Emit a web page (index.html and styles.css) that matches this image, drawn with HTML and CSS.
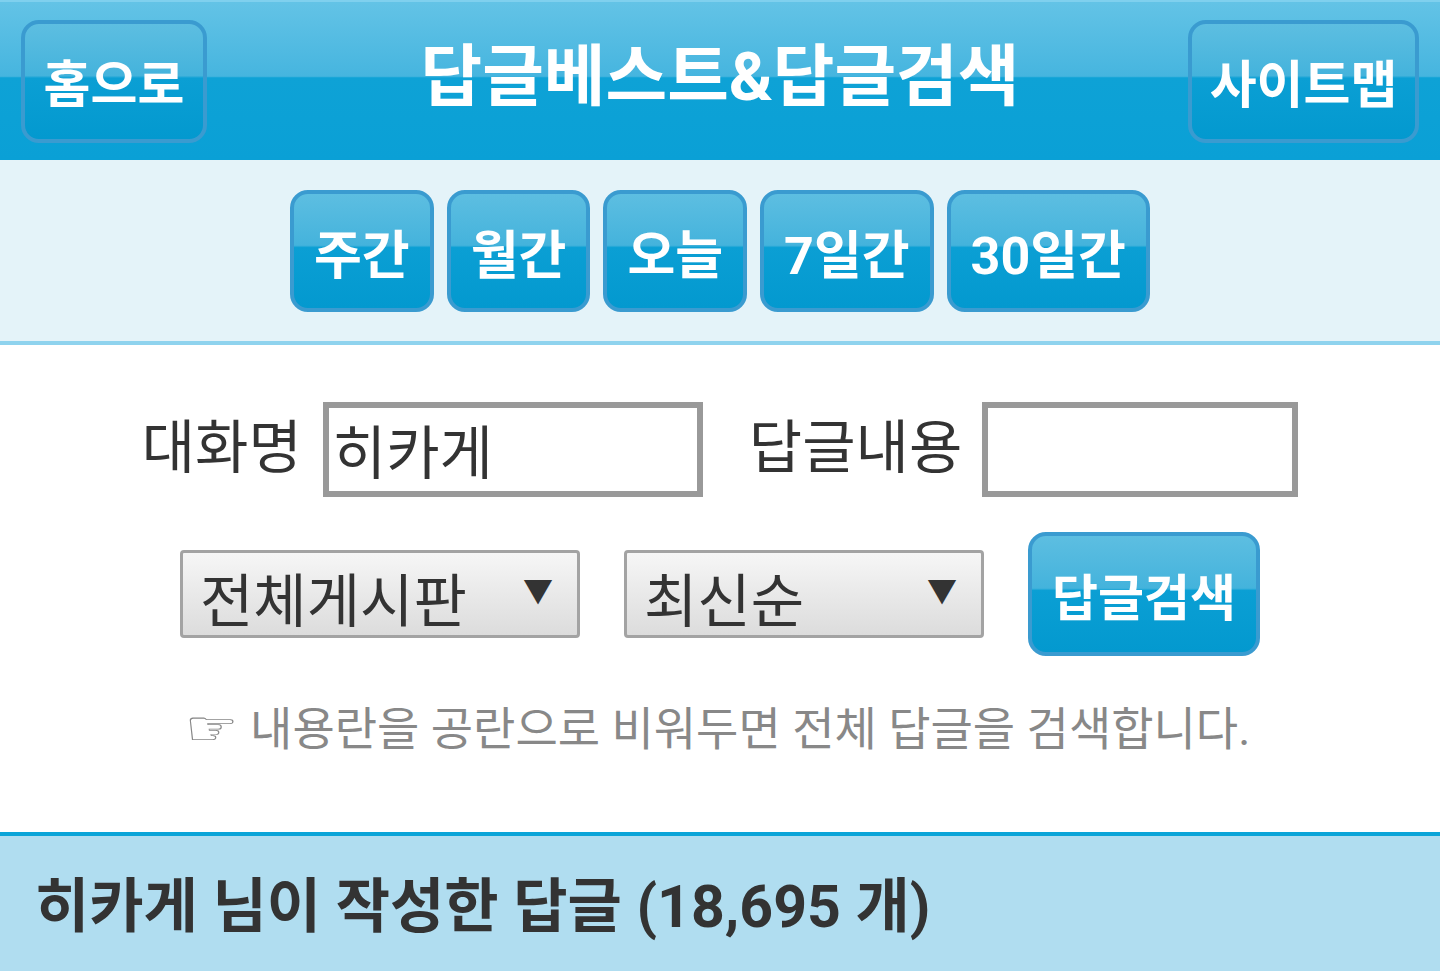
FILE: index.html
```html
<!DOCTYPE html>
<html lang="ko">
<head>
    <meta charset="UTF-8">
    <title>답글베스트&amp;답글검색</title>
    <link rel="stylesheet" href="styles.css">
</head>
<body>
<div class="header">
    <a class="head-btn btn-home" href="#">홈으로</a>
    <h1 class="title">답글베스트&amp;답글검색</h1>
    <a class="head-btn btn-map" href="#">사이트맵</a>
</div>

<!-- 기간 탭 -->
<div class="tabs">
    <a class="tab" href="#">주간</a>
    <a class="tab" href="#">월간</a>
    <a class="tab" href="#">오늘</a>
    <a class="tab" href="#">7일간</a>
    <a class="tab" href="#">30일간</a>
</div>

<div class="search">
    <div class="row">
        <label class="label">대화명</label>
        <input class="field field-name" type="text" value="히카게">
        <label class="label label-gap">답글내용</label>
        <input class="field field-body" type="text" value="">
    </div>
    <div class="row row-select">
        <div class="select select-board"><span>전체게시판</span><em>▼</em></div>
        <div class="select select-sort"><span>최신순</span><em>▼</em></div>
        <a class="btn-search" href="#">답글검색</a>
    </div>
    <p class="hint"><span class="hand">☞</span> 내용란을 공란으로 비워두면 전체 답글을 검색합니다.</p>
</div>

<div class="result">
    <h2>히카게 님이 작성한 답글 (18,695 개)</h2>
</div>
</body>
</html>
```

FILE: styles.css
```css
html, body, div, h1, h2, p, a, span, em, label {
    margin: 0;
    padding: 0;
}

body {
    background: #fff;
    font-family: Roboto, "Noto Sans CJK KR", sans-serif;
    color: #333;
}

a {
    text-decoration: none;
}

/* 상단 헤더 */
.header {
    height: 160px;
    padding: 0 21px;
    box-sizing: border-box;
    display: grid;
    grid-template-columns: 1fr auto 1fr;
    align-items: center;
    border-top: 2px solid #7fd0ee;
    background: linear-gradient(to bottom, #63c3e6 0%, #46b5df 47%, #0ea2d6 48%, #0aa0d6 100%);
}

.title {
    font-size: 67px;
    font-weight: bold;
    color: #fff;
    line-height: 1;
    margin-bottom: 8px;
}

.head-btn {
    display: flex;
    align-items: center;
    justify-content: center;
    height: 123px;
    padding: 0 10px;
    box-sizing: border-box;
    border: 4px solid #3a9bd0;
    border-radius: 18px;
    font-size: 51px;
    font-weight: bold;
    color: #fff;
    background: linear-gradient(to bottom, #5dbee1 0%, #44b3dc 45%, #0b9fd4 47%, #0399cf 100%);
}

.btn-home {
    width: 186px;
    justify-self: start;
}

.btn-map {
    width: 231px;
    justify-self: end;
}

/* 탭 */
.tabs {
    background: #e4f3f9;
    padding: 30px 0 29px;
    border-bottom: 4px solid #8fd3ee;
    display: flex;
    justify-content: center;
    gap: 13px;
}

.tab {
    display: flex;
    align-items: center;
    height: 122px;
    padding: 0 20px;
    box-sizing: border-box;
    border: 4px solid #3a9bd0;
    border-radius: 18px;
    font-size: 52px;
    font-weight: bold;
    color: #fff;
    background: linear-gradient(to bottom, #5dbee1 0%, #44b3dc 45%, #0b9fd4 47%, #0399cf 100%);
}

/* 검색 */
.search {
    padding: 56px 0 0;
    height: 487px;
    box-sizing: border-box;
}

.row {
    display: flex;
    align-items: center;
    justify-content: center;
}

.label {
    font-size: 58px;
    color: #333;
    margin-right: 21px;
    margin-bottom: 12px;
}

.label-gap {
    margin-left: 46px;
    margin-right: 20px;
}

.field {
    height: 95px;
    box-sizing: border-box;
    border: 6px solid #999;
    padding: 0 4px;
    font-family: Roboto, "Noto Sans CJK KR", sans-serif;
    font-size: 58px;
    color: #333;
    background: #fff;
    outline: none;
}

.field-name {
    width: 380px;
}

.field-body {
    width: 316px;
}

.row-select {
    margin-top: 35px;
    gap: 44px;
}

.select {
    display: flex;
    align-items: center;
    justify-content: space-between;
    height: 88px;
    padding: 6px 24px 0 17px;
    box-sizing: border-box;
    border: 3px solid #a3a3a3;
    border-radius: 4px;
    background: linear-gradient(to bottom, #f6f6f6, #dcdcdc);
    font-size: 58px;
    color: #333;
}

.select em {
    font-style: normal;
    font-size: 30px;
    color: #333;
    margin-top: -16px;
}

.select-board {
    width: 400px;
}

.select-sort {
    width: 360px;
}

.btn-search {
    display: flex;
    align-items: center;
    justify-content: center;
    width: 232px;
    height: 124px;
    box-sizing: border-box;
    border: 4px solid #3a9bd0;
    border-radius: 18px;
    font-size: 50px;
    font-weight: bold;
    color: #fff;
    background: linear-gradient(to bottom, #5dbee1 0%, #44b3dc 45%, #0b9fd4 47%, #0399cf 100%);
}

.hint {
    margin-top: 36px;
    text-align: center;
    font-size: 46px;
    color: #888;
}

.hand {
    display: inline-block;
    font-family: "DejaVu Sans", sans-serif;
    font-size: 48px;
    transform: scaleX(1.26);
    margin-right: 6px;
}

/* 결과 */
.result {
    border-top: 4px solid #0aa4d8;
    background: #b0ddf0;
    padding: 36px 35px 40px;
}

.result h2 {
    font-size: 59px;
    font-weight: bold;
    color: #333;
    line-height: 1.2;
}
```
